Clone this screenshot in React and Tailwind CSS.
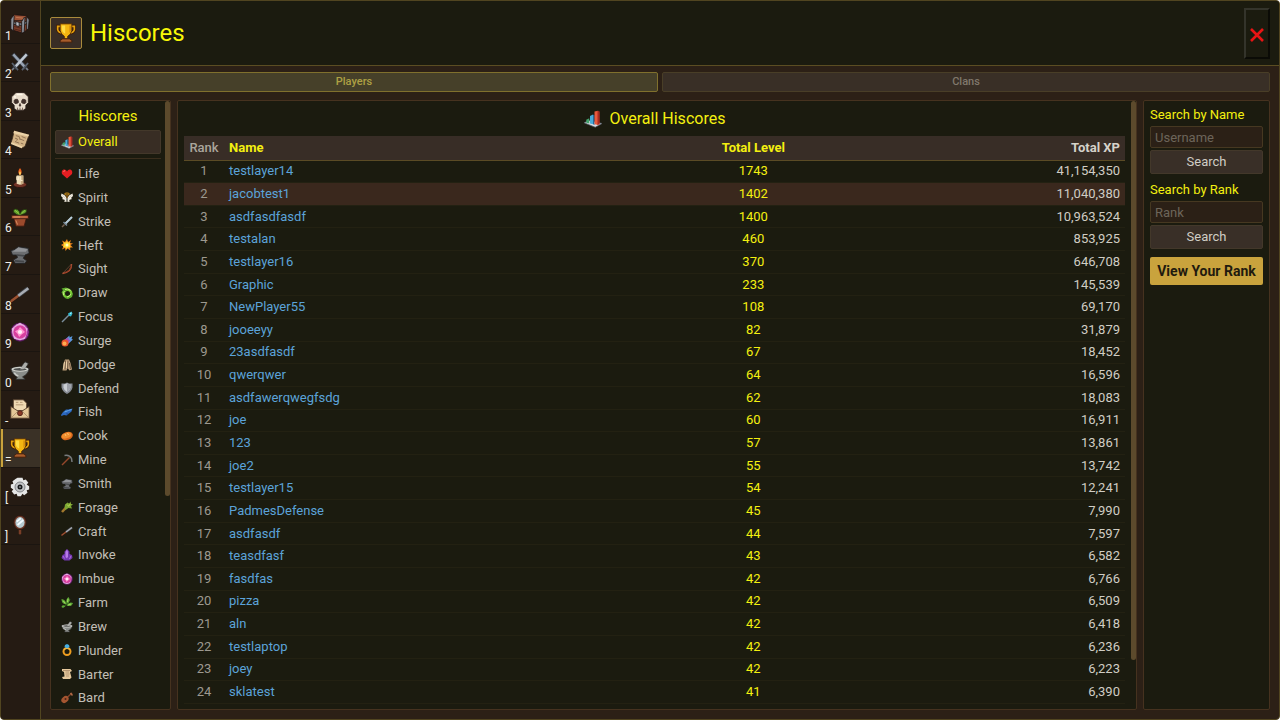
import { useState } from "react";
import clsx from "clsx";

const ICONS = {
    chest: (
        <g stroke="#1d1512" strokeWidth="1">
            <path d="M1 6 L5 1 L20 2 L23 7 L22 18 L15 23 L2 19Z" fill="#7a3c28" />
            <path d="M1 6 L5 1 L20 2 L16 8 L2 8Z" fill="#9c5236" />
            <path d="M2 9 L15 11 L15 14 L2 12Z M15 11 L23 7 L23 10 L15 14Z" fill="#7d838c" />
            <path d="M1 6 L4 2 L5 3 L4 20 L1 18Z M14 9 L17 4 L18 5 L17 22 L14 23Z M20 3 L23 7 L22 18 L20 19Z" fill="#8b919a" />
            <path d="M7 9 L11 10 L11 15 L7 14Z" fill="#b4bac2" />
            <path d="M5 15 L13 17 M5 18 L13 20" stroke="#4a2217" fill="none" />
            <path d="M7 4 L16 5" stroke="#c27a54" fill="none" />
        </g>
    ),
    swords: (
        <g strokeLinecap="square">
            <path d="M5 4 L18 18 M19 4 L6 18" stroke="#30343b" strokeWidth="5" />
            <path d="M5 4 L17 17" stroke="#98a3b2" strokeWidth="3" />
            <path d="M19 4 L7 17" stroke="#c0c8d2" strokeWidth="3" />
            <path d="M3 14 L9 21 M21 14 L15 21" stroke="#59616d" strokeWidth="2" />
            <path d="M4 20 L3 21 M20 20 L21 21" stroke="#7b828d" strokeWidth="2" />
        </g>
    ),
    skull: (
        <>
            <path d="M7 2 H17 L22 7 V14 L19 17 V21 L16 23 H8 L5 21 V17 L2 14 V7Z" fill="#e8dccb" stroke="#2b211c" />
            <path d="M5 11 L7 10 H9 L10 12 V14 L8 15 H6 L5 14Z M14 12 L15 10 H17 L19 11 V14 L18 15 H16 L14 14Z M12 15 L13 18 H11Z" fill="#40302a" stroke="#40302a" />
            <path d="M9 20 V23 M12 20 V23 M15 20 V23" stroke="#6c5549" />
            <path d="M8 4 H15 M5 7 H7" stroke="#fff8ea" strokeWidth="2" />
        </>
    ),
    map: (
        <>
            <path d="M5 2 L23 7 L18 21 L14 23 L1 17 L3 11Z" fill="#d3b386" stroke="#3a2a1d" />
            <path d="M5 2 L23 7 L22 9 L4 5Z M2 16 L15 21 L14 23 L1 18Z" fill="#ecd3a8" />
            <path d="M7 8 L11 9 M14 9 L19 11 M6 11 L9 12 L8 14 M12 12 L17 14 M6 15 L11 17 M13 17 L16 18 M11 9 L12 13" stroke="#86684a" fill="none" />
        </>
    ),
    candle: (
        <>
            <ellipse cx="12" cy="20" rx="8" ry="3.5" fill="#733426" stroke="#2a1511" />
            <path d="M8 9 L16 9 L16 19 Q12 21 8 19Z" fill="#ecdcb7" />
            <path d="M13 9 H16 V19 L13 20Z" fill="#c4a980" />
            <path d="M8 10 V14 H10 V11 M13 10 V15 H15" stroke="#fff4d4" fill="none" />
            <path d="M12 0 Q16 5 12 9 Q8 5 12 0Z" fill="#f0641e" />
            <path d="M12 4 Q14 6 12 9 Q10 6 12 4Z" fill="#ffe36a" />
        </>
    ),
    plant: (
        <>
            <path d="M12 11 Q7 9 4 6 Q4 1 9 3 Q12 5 12 8 Q14 2 20 3 Q21 8 14 9Z" fill="#5e9c2c" stroke="#25380f" />
            <path d="M6 4 L11 8 M18 4 L14 8" stroke="#a4d34c" />
            <path d="M4 12 H20 L17 23 H7Z" fill="#9c4a2c" stroke="#37180f" />
            <path d="M2 10 H22 V14 H2Z" fill="#bd6540" stroke="#37180f" />
            <path d="M4 12 H12 M7 16 L9 21" stroke="#e39b6b" />
        </>
    ),
    anvil: (
        <>
            <path d="M1 7 L6 5 L10 2 L22 4 L23 10 L18 12 L16 16 L20 19 L18 22 L6 22 L4 18 L9 15 L8 12 L3 12Z" fill="#6b6d70" stroke="#212224" />
            <path d="M6 6 L10 3 L21 5 L19 8 L8 8 L3 8Z" fill="#919397" />
            <path d="M8 12 L17 13 M6 19 L17 20" stroke="#444649" strokeWidth="2" />
        </>
    ),
    chisel: (
        <>
            <path d="M2 20 L10 14" stroke="#2a1610" strokeWidth="5" strokeLinecap="round" />
            <path d="M2 20 L10 14" stroke="#9a5231" strokeWidth="3" strokeLinecap="round" />
            <path d="M10 14 L22 5" stroke="#3d4045" strokeWidth="5" />
            <path d="M10 14 L22 5" stroke="#a9adb4" strokeWidth="3" />
        </>
    ),
    orb: (
        <>
            <circle cx="12" cy="12" r="11" fill="#9b3299" stroke="#3a1540" />
            <path d="M12 1 L17 4 L21 8 L20 14 L18 20 L12 22 L5 20 L3 14 L2 8 L8 3Z" fill="#e3b0e3" />
            <circle cx="12" cy="12" r="8" fill="#d63f9f" />
            <path d="M12 6 L15 9 L18 12 L14 15 L11 18 L9 14 L6 11 L10 9Z" fill="#ff93cf" />
            <circle cx="12" cy="12" r="2.5" fill="#ffeef9" />
        </>
    ),
    mortar: (
        <>
            <path d="M12 9 L18 1 L22 3 L17 11Z" fill="#acada9" stroke="#303131" />
            <path d="M1 9 Q12 5 23 9 Q22 16 15 19 L18 22 H7 L9 19 Q2 16 1 9Z" fill="#898c89" stroke="#303131" />
            <ellipse cx="12" cy="10" rx="10" ry="3" fill="#d0d1cb" />
            <ellipse cx="12" cy="10" rx="8" ry="1.6" fill="#4d4f4e" />
            <path d="M12 10 L18 2 L21 4 L16 10Z" fill="#acada9" />
            <path d="M5 14 Q7 17 10 18" stroke="#c8cac5" fill="none" strokeWidth="2" />
        </>
    ),
    letter: (
        <>
            <path d="M4 1 H16 L20 5 V14 H4Z" fill="#efd9b2" stroke="#4f3927" />
            <path d="M7 4 H10 M12 4 H15 M7 7 H16" stroke="#a98b68" />
            <path d="M1 9 L12 16 L23 9 V23 H1Z" fill="#e4c898" stroke="#4f3927" />
            <path d="M1 23 L9 15 M23 23 L15 15" stroke="#a98b68" />
            <circle cx="12" cy="17" r="3" fill="#8a3b27" stroke="#4d2118" />
        </>
    ),
    trophy: (
        <>
            <path d="M6 4 H2 V8 Q3 12 8 12 M18 4 H22 V8 Q21 12 16 12" fill="none" stroke="#3c1b08" strokeWidth="4" />
            <path d="M6 4 H2 V8 Q3 12 8 12 M18 4 H22 V8 Q21 12 16 12" fill="none" stroke="#e6a20d" strokeWidth="2" />
            <path d="M5 1 H19 V9 Q18 14 14 16 V19 H10 V16 Q6 14 5 9Z" fill="#f4b511" stroke="#4b2408" />
            <path d="M7 3 H11 V13 Q7 11 7 7Z" fill="#ffdc45" />
            <path d="M16 3 H18 V9 L16 12Z" fill="#d98d0c" />
            <path d="M8 19 H16 L19 21 V23 H5 V21Z" fill="#a95d2b" stroke="#3c1b08" />
        </>
    ),
    gear: (
        <>
            <path d="M9 1 H15 L16 4 L19 3 L22 7 L20 9 L23 11 V15 L20 16 L21 19 L17 22 L15 20 L13 23 H9 L8 20 L5 21 L2 17 L4 15 L1 13 V9 L4 8 L3 5 L7 2Z" fill="#e5e6e6" />
            <circle cx="12" cy="12" r="6" fill="#c3c5c7" stroke="#717477" />
            <circle cx="12" cy="12" r="3" fill="#17191b" />
            <circle cx="12" cy="12" r="1" fill="#d5d7d9" />
        </>
    ),
    mirror: (
        <>
            <path d="M12 15 V22" stroke="#7a3e27" strokeWidth="3" strokeLinecap="round" />
            <ellipse cx="12" cy="9" rx="7.5" ry="8.5" fill="#713b29" stroke="#2c1711" />
            <ellipse cx="12" cy="9" rx="5.5" ry="6.5" fill="#b7cbd2" />
            <path d="M8 8 L13 4 M9 12 L16 6" stroke="#f3fbff" strokeWidth="2" />
        </>
    ),
    chart: (
        <>
            <path d="M0 17 L7 14 L24 18 L15 23Z" fill="#d8dce2" stroke="#555b66" />
            <path d="M3 13 L7 11 V18 L3 17Z" fill="#43a46d" />
            <path d="M8 8 L12 6 V19 L8 18Z" fill="#48abd8" />
            <path d="M12 6 L14 7 V20 L12 19Z" fill="#246a9d" />
            <path d="M14 2 L19 1 V20 L14 19Z" fill="#e8593c" />
            <path d="M18 1 L21 2 V19 L18 20Z" fill="#a92b22" />
        </>
    ),
    heart: (
        <>
            <path d="M12 21 L2 12 Q0 5 5 3 Q10 2 12 7 Q14 2 19 3 Q24 5 22 12Z" fill="#e51e22" />
            <path d="M5 7 Q6 5 8 6" stroke="#ff8d86" strokeWidth="2" fill="none" />
        </>
    ),
    wings: (
        <>
            <path d="M11 20 L6 19 L8 16 L2 14 L4 12 L0 8 L1 3 L8 7 L11 12Z M13 20 L18 19 L16 16 L22 14 L20 12 L24 8 L23 3 L16 7 L13 12Z" fill="#f2eee1" />
            <path d="M3 7 L9 13 M21 7 L15 13" stroke="#b8b3a4" />
            <ellipse cx="12" cy="4" rx="5" ry="2" fill="none" stroke="#d4941c" strokeWidth="2" />
            <path d="M12 7 V12" stroke="#b87517" strokeWidth="2" />
        </>
    ),
    sword: (
        <>
            <path d="M8 16 L22 2" stroke="#c8dde9" strokeWidth="4" />
            <path d="M9 16 L22 3" stroke="#738c9d" />
            <path d="M5 12 L12 19" stroke="#768897" strokeWidth="3" />
            <path d="M7 17 L2 22" stroke="#786454" strokeWidth="3" />
        </>
    ),
    burst: (
        <>
            <path d="M12 0 L14 6 L20 2 L18 8 L24 9 L19 12 L24 17 L18 17 L19 23 L13 19 L9 24 L8 18 L2 21 L5 15 L0 12 L5 9 L2 3 L8 6Z" fill="#ed831b" />
            <path d="M12 4 L14 7 L18 7 L18 12 L19 17 L14 17 L11 20 L9 17 L4 16 L6 12 L5 7 L10 7Z" fill="#ffdc35" />
            <circle cx="12" cy="12" r="3" fill="#fffbc5" />
        </>
    ),
    bow: (
        <>
            <path d="M21 2 Q22 17 3 21" fill="none" stroke="#b04c2e" strokeWidth="3" />
            <path d="M21 2 L3 21" stroke="#94604f" strokeWidth="1" />
            <path d="M20 5 Q20 15 7 19" fill="none" stroke="#59251a" />
        </>
    ),
    swirl: (
        <>
            <circle cx="13" cy="13" r="7.5" fill="none" stroke="#78c936" strokeWidth="5" />
            <path d="M1 3 L10 1 L16 4 L9 8 L5 14 L1 11 L4 6Z M19 15 L24 12 L22 20 L14 24 L7 22Z" fill="#5dab2d" />
            <path d="M8 5 Q14 2 19 7 M20 14 Q18 19 12 20 M5 16 Q3 11 7 8" stroke="#c8f283" strokeWidth="2" fill="none" />
        </>
    ),
    wand: (
        <>
            <path d="M2 22 L17 7" stroke="#7b8e9c" strokeWidth="3" />
            <path d="M14 5 L21 1 L23 5 L20 11 L16 10Z" fill="#32b9d1" />
            <path d="M18 5 L21 4" stroke="#c7ffff" strokeWidth="2" />
        </>
    ),
    comet: (
        <>
            <path d="M7 10 L17 1 L17 5 L23 2 L21 8 L24 9 L14 18Z" fill="#5a9be1" />
            <path d="M7 9 L15 5 L15 9 L19 10 L12 19Z" fill="#a54fb2" />
            <circle cx="8" cy="16" r="7" fill="#e9552d" />
            <circle cx="7" cy="17" r="4" fill="#ffad50" />
        </>
    ),
    cloak: (
        <>
            <path d="M8 1 H16 L19 8 L22 21 L17 23 L13 18 L11 23 H3 L5 9Z" fill="#bd9f7b" />
            <path d="M9 3 L8 21 M14 3 L13 20 M17 8 L19 20" stroke="#715b45" strokeWidth="2" />
            <path d="M7 6 L5 20 M11 5 V18" stroke="#ead0a6" strokeWidth="2" />
        </>
    ),
    shield: (
        <>
            <path d="M1 3 L8 3 L12 1 L16 3 L23 3 V11 Q21 19 12 24 Q3 19 1 11Z" fill="#858a92" />
            <path d="M5 5 L12 3 L19 5 V11 Q18 17 12 20 Q6 17 5 11Z" fill="#c9cdd2" />
            <path d="M12 3 L19 5 V11 Q18 17 12 20Z" fill="#9da1a9" />
        </>
    ),
    fish: (
        <>
            <path d="M0 18 L4 12 L10 7 L15 7 L23 5 L21 11 L16 15 L11 19 L6 18 L1 20Z" fill="#2b68bf" />
            <path d="M7 12 L15 9 L21 7" stroke="#67a9e8" strokeWidth="2" />
            <path d="M10 15 L13 19 L15 15" fill="#1b3f85" />
        </>
    ),
    bread: (
        <>
            <ellipse cx="12" cy="12" rx="12" ry="8" fill="#d9661c" transform="rotate(-18 12 12)" />
            <ellipse cx="11" cy="11" rx="10" ry="5.5" fill="#f08e2f" transform="rotate(-18 11 11)" />
            <path d="M8 8 L10 12 M13 6 L15 10" stroke="#ffc06c" strokeWidth="2" />
        </>
    ),
    pickaxe: (
        <>
            <path d="M2 22 L17 7" stroke="#94472a" strokeWidth="3" />
            <path d="M7 3 Q17 1 21 9 L22 16" fill="none" stroke="#777a7c" strokeWidth="3" />
        </>
    ),
    herbs: (
        <>
            <path d="M2 22 L14 9" stroke="#a1782d" strokeWidth="5" />
            <path d="M8 7 L13 3 L16 5 L20 1 L19 6 L24 6 L20 10 L22 15 L15 14 L9 18 L7 13Z" fill="#7ba632" />
            <path d="M12 7 L15 10 M19 5 L15 11" stroke="#b8d353" strokeWidth="2" />
        </>
    ),
    crystal: (
        <>
            <path d="M12 0 L17 5 L17 10 L22 12 L23 18 L17 23 H7 L1 18 L3 12 L7 10 L7 5Z" fill="#7338b2" />
            <path d="M12 1 L9 6 V16 L12 19 L14 15 V6Z" fill="#b87be8" />
            <path d="M4 14 L7 19 M20 14 L17 20" stroke="#b16ee0" strokeWidth="2" />
        </>
    ),
    leaves: (
        <>
            <path d="M5 21 L18 5 M9 15 L3 8 M9 15 L21 16" stroke="#35651e" strokeWidth="2" />
            <path d="M11 13 Q9 4 15 0 Q20 7 14 13Z M9 14 Q1 14 1 4 Q9 5 11 14Z M11 17 Q17 8 24 12 Q21 21 11 17Z M9 18 Q2 14 1 20 Q4 24 9 18Z" fill="#5da735" />
            <path d="M14 4 L13 10 M5 8 L8 13 M14 16 L20 14" stroke="#a6d960" strokeWidth="2" />
        </>
    ),
    ring: (
        <>
            <circle cx="12" cy="15" r="7" fill="none" stroke="#ed9d20" strokeWidth="4" />
            <path d="M6 11 Q12 6 18 11" fill="none" stroke="#ffe068" />
            <path d="M8 2 L12 0 L16 2 L17 6 L12 9 L7 6Z" fill="#46aee2" />
        </>
    ),
    scroll: (
        <>
            <path d="M2 2 H19 L22 6 L18 8 L21 19 L18 22 H4 L2 18 L7 17 L6 8 L2 6Z" fill="#e5c89c" />
            <path d="M9 8 H16 M9 12 H17 M10 16 H16 M4 5 H18" stroke="#826045" />
        </>
    ),
    lute: (
        <>
            <path d="M10 13 L22 2" stroke="#80422b" strokeWidth="3" />
            <path d="M19 2 L23 7" stroke="#b36b46" strokeWidth="3" />
            <ellipse cx="8" cy="15" rx="8" ry="6" fill="#a45530" transform="rotate(-40 8 15)" />
            <circle cx="9" cy="14" r="2" fill="#4b2218" />
        </>
    ),
};

const Icon = ({ name, className }) => (
    <svg viewBox="0 0 24 24" className={clsx("shrink-0", className)} aria-hidden="true">
        {ICONS[name]}
    </svg>
);

const NAV = [
    ["1", "chest"], ["2", "swords"], ["3", "skull"], ["4", "map"], ["5", "candle"],
    ["6", "plant"], ["7", "anvil"], ["8", "chisel"], ["9", "orb"], ["0", "mortar"],
    ["-", "letter"], ["=", "trophy"], ["[", "gear"], ["]", "mirror"],
];

const SKILLS = [
    ["Life", "heart"], ["Spirit", "wings"], ["Strike", "sword"], ["Heft", "burst"],
    ["Sight", "bow"], ["Draw", "swirl"], ["Focus", "wand"], ["Surge", "comet"],
    ["Dodge", "cloak"], ["Defend", "shield"], ["Fish", "fish"], ["Cook", "bread"],
    ["Mine", "pickaxe"], ["Smith", "anvil"], ["Forage", "herbs"], ["Craft", "chisel"],
    ["Invoke", "crystal"], ["Imbue", "orb"], ["Farm", "leaves"], ["Brew", "mortar"],
    ["Plunder", "ring"], ["Barter", "scroll"], ["Bard", "lute"],
];

const PLAYERS = [
    ["testlayer14", 1743, 41154350],
    ["jacobtest1", 1402, 11040380],
    ["asdfasdfasdf", 1400, 10963524],
    ["testalan", 460, 853925],
    ["testlayer16", 370, 646708],
    ["Graphic", 233, 145539],
    ["NewPlayer55", 108, 69170],
    ["jooeeyy", 82, 31879],
    ["23asdfasdf", 67, 18452],
    ["qwerqwer", 64, 16596],
    ["asdfawerqwegfsdg", 62, 18083],
    ["joe", 60, 16911],
    ["123", 57, 13861],
    ["joe2", 55, 13742],
    ["testlayer15", 54, 12241],
    ["PadmesDefense", 45, 7990],
    ["asdfasdf", 44, 7597],
    ["teasdfasf", 43, 6582],
    ["fasdfas", 42, 6766],
    ["pizza", 42, 6509],
    ["aln", 42, 6418],
    ["testlaptop", 42, 6236],
    ["joey", 42, 6223],
    ["sklatest", 41, 6390],
];

const CURRENT_PLAYER = "jacobtest1";

const SideNav = () => (
    <nav className="w-10 shrink-0 border-r border-[#514520] bg-[#251b13] pt-1">
        <ul className="grid h-[540px] grid-rows-14">
            {NAV.map(([hotkey, icon]) => (
                <li key={hotkey} className="border-b border-[#1b1510]">
                    <button
                        className={clsx(
                            "relative flex h-full w-full items-center justify-center border-l-2 pr-1",
                            icon === "trophy" ? "border-[#c9a33d] bg-[#3a3126]" : "border-transparent"
                        )}
                    >
                        <Icon name={icon} className="size-5" />
                        <span className="absolute -bottom-px left-0.5 text-xs leading-4 text-[#f0eee8]">{hotkey}</span>
                    </button>
                </li>
            ))}
        </ul>
    </nav>
);

const SkillList = () => (
    <aside className="flex w-[121px] shrink-0 overflow-hidden rounded-xs border border-[#46321f] bg-[#1b1b0f]">
        <div className="min-w-0 flex-1 pt-[5px] pl-1">
            <h2 className="mb-1 text-center text-[15px] leading-5 text-[#f4f010]">Hiscores</h2>
            <button className="flex h-6 w-full items-center gap-1 rounded-xs border border-[#43382a] bg-[#382d24] px-[5px] text-[13px] text-[#f4f010]">
                <Icon name="chart" className="size-[13px]" />
                Overall
            </button>
            <hr className="mt-1 mb-[3px] border-[#3a2e1d]" />
            <ul className="grid h-[548px] grid-rows-23">
                {SKILLS.map(([skill, icon]) => (
                    <li key={skill}>
                        <button className="flex h-full w-full items-center gap-[5px] px-[6px] text-[13px] text-[#c2bfb6]">
                            <Icon name={icon} className="size-3" />
                            {skill}
                        </button>
                    </li>
                ))}
            </ul>
        </div>
        <div className="ml-1 w-[5px]">
            <div className="h-[65%] rounded-full bg-[#5c4a2c]" />
        </div>
    </aside>
);

const HiscoreTable = () => (
    <main className="flex min-w-0 flex-1 overflow-hidden rounded-xs border border-[#46321f] bg-[#1b1b0f]">
        <div className="min-w-0 flex-1 p-[6px]">
            <h2 className="mt-px mb-[6px] flex h-[22px] items-center justify-center gap-2 text-base text-[#f4f010]">
                <Icon name="chart" className="size-[18px]" />
                Overall Hiscores
            </h2>
            <table className="h-[568px] w-full table-fixed text-[13px] leading-5">
                <thead>
                    <tr className="h-6 border-b border-[#5b4b25] bg-[#382d26]">
                        <th className="w-10 p-0 text-center font-medium text-[#aaa59c]">Rank</th>
                        <th className="px-[5px] py-0 text-left font-bold text-[#f4f010]">Name</th>
                        <th className="w-[19%] p-0 text-center font-bold text-[#f4f010]">Total Level</th>
                        <th className="w-[30%] px-[5px] py-0 text-right font-bold text-[#d5d2ca]">Total XP</th>
                    </tr>
                </thead>
                <tbody>
                    {PLAYERS.map(([name, level, xp], i) => (
                        <tr
                            key={name}
                            className={clsx("border-b border-[#232112]", name === CURRENT_PLAYER && "bg-[#3a281d]")}
                        >
                            <td className="p-0 text-center text-[#9d998f]">{i + 1}</td>
                            <td className="px-[5px] py-0">
                                <a href={`#${name}`} className="text-[#5ba3d9]">{name}</a>
                            </td>
                            <td className="p-0 text-center text-[#f4f010]">{level}</td>
                            <td className="px-[5px] py-0 text-right text-[#d0cdc4]">{xp.toLocaleString("en-US")}</td>
                        </tr>
                    ))}
                </tbody>
            </table>
        </div>
        <div className="w-[5px]">
            <div className="h-[92%] rounded-full bg-[#5c4a2c]" />
        </div>
    </main>
);

const SearchForm = ({ id, label, placeholder }) => (
    <form className="flex flex-col" onSubmit={(e) => e.preventDefault()}>
        <label htmlFor={id} className="mb-[3px] text-[13px] leading-4 text-[#f4f010]">{label}</label>
        <input
            id={id}
            placeholder={placeholder}
            className="mb-0.5 h-[22px] w-full rounded-xs border border-[#463821] bg-[#2b2016] px-1 text-[13px] text-[#c9c5bb] placeholder:text-[#6d655a]"
        />
        <button className="h-6 rounded-xs border border-[#43382a] bg-[#392f27] text-[13px] text-[#d0cdc4]">Search</button>
    </form>
);

const App = () => {
    const [tab, setTab] = useState("Players");

    return (
        <div className="flex h-screen overflow-hidden rounded-sm border border-[#514520] bg-[#2c2016] font-['Roboto','Liberation_Sans',sans-serif]">
            <SideNav />

            <div className="flex min-w-0 flex-1 flex-col">
                <header className="flex h-[65px] shrink-0 items-center justify-between border-b border-[#5b4d22] bg-[#1b1b0f] px-[9px]">
                    <div className="flex items-center gap-2">
                        <div className="flex size-8 items-center justify-center rounded-xs border border-[#a98b3c] bg-[#392d25]">
                            <Icon name="trophy" className="size-5" />
                        </div>
                        <h1 className="text-2xl text-[#f8f808]">Hiscores</h1>
                    </div>
                    <button
                        aria-label="Close"
                        className="flex h-[51px] w-[26px] items-center justify-center border-2 border-t-[#34342b] border-r-[#0b0b06] border-b-[#0b0b06] border-l-[#34342b] pt-1"
                    >
                        <svg viewBox="0 0 14 14" className="size-[14px]" aria-hidden="true">
                            <path d="M1 1 L13 13 M13 1 L1 13" stroke="#e81414" strokeWidth="2.6" />
                        </svg>
                    </button>
                </header>

                {/* Tabs */}
                <div className="flex shrink-0 gap-1 px-[9px] pt-[6px] pb-2">
                    {["Players", "Clans"].map((name) => (
                        <button
                            key={name}
                            onClick={() => setTab(name)}
                            className={clsx(
                                "h-5 flex-1 rounded-xs border text-[11px] leading-4 font-medium",
                                tab === name
                                    ? "border-[#80702d] bg-[#464029] text-[#aea044]"
                                    : "border-[#493e27] bg-[#392f26] text-[#80786c]"
                            )}
                        >
                            {name}
                        </button>
                    ))}
                </div>

                <div className="flex min-h-0 flex-1 gap-[6px] px-[9px] pb-[9px]">
                    <SkillList />
                    <HiscoreTable />

                    <aside className="flex w-[127px] shrink-0 flex-col gap-2 rounded-xs border border-[#46321f] bg-[#1b1b0f] p-[6px]">
                        <SearchForm id="search-name" label="Search by Name" placeholder="Username" />
                        <SearchForm id="search-rank" label="Search by Rank" placeholder="Rank" />
                        <button className="h-7 rounded-xs bg-[#c9a33d] text-sm font-bold text-[#1f1a0e]">
                            View Your Rank
                        </button>
                    </aside>
                </div>
            </div>
        </div>
    );
};

export default App;
